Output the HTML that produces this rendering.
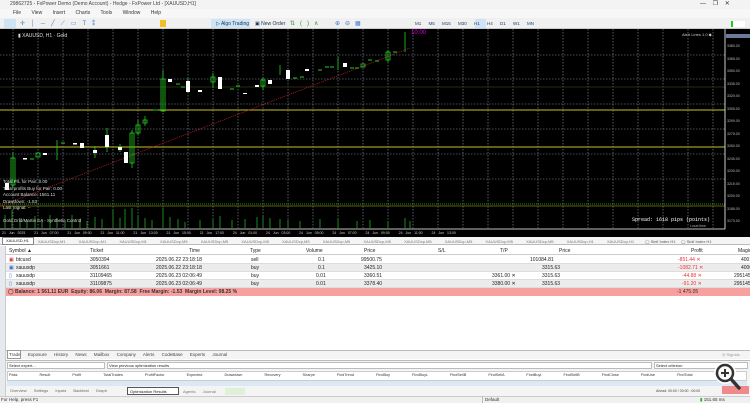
<!DOCTYPE html>
<html><head><meta charset="utf-8"><style>
*{margin:0;padding:0;box-sizing:border-box}
body{width:750px;height:403px;overflow:hidden;background:#fff;font-family:"Liberation Sans",sans-serif;font-size:5px;color:#222;position:relative}
.a{position:absolute;white-space:nowrap}
.row{position:absolute;left:6px;width:744px;height:8px;border-bottom:1px solid #ddd}
.c{position:absolute;top:1px;font-size:5px}
</style></head><body>
<div class="a" style="left:0;top:0;width:750px;height:9px;background:#f3f3f3"></div>
<div class="a" style="left:10px;top:1px;font-size:5px;color:#444">29862725 - FxPower Demo (Demo Account) - Hedge - FxPower Ltd - [XAUUSD,H1]</div>
<div class="a" style="left:700px;top:0;font-size:6px;color:#333">—&nbsp;&nbsp;&nbsp;&nbsp;❐&nbsp;&nbsp;&nbsp;&nbsp;✕</div>
<div class="a" style="left:0;top:9px;width:750px;height:9px;background:#f7f7f7"></div>
<div class="a" style="left:13px;top:10px;font-size:5px;color:#333;word-spacing:9px">File View Insert Charts Tools Window Help</div>
<div class="a" style="left:0;top:18px;width:750px;height:11px;background:#f0f0f0;border-bottom:1px solid #ccc"></div>
<div class="a" style="left:4px;top:19px;width:12px;height:9px;background:#cfe3f7"></div>
<div class="a" style="left:211px;top:19px;width:39px;height:9px;background:#cfe3f7"></div>
<div class="a" style="left:216px;top:21px;font-size:5px;color:#135">▷ Algo Trading</div>
<div class="a" style="left:255px;top:21px;font-size:5px;color:#135">▣ New Order</div>
<div class="a" style="left:160px;top:20px;width:6px;height:7px;background:#f0c020"></div>
<div class="a" style="left:20px;top:20px;font-size:6px;color:#3a7bd0;letter-spacing:6px">✛│─╱⟋▭T⁑</div>
<div class="a" style="left:290px;top:20px;font-size:6px;color:#2a9a2a;letter-spacing:5px">⇅()∧</div>
<div class="a" style="left:335px;top:20px;font-size:6px;color:#3a7bd0;letter-spacing:5px">⊕⊖▦</div>
<div class="a" style="left:475px;top:19px;width:11px;height:9px;background:#cfe3f7"></div>
<div class="a" style="left:415px;top:21px;font-size:4.5px;color:#246;word-spacing:6px">M1 M5 M15 M30 H1 H4 D1 W1 MN</div>
<div class="a" style="left:731px;top:21px;width:14px;height:6px;background:#fff;border-left:2px solid #2c2"></div>
<div class="a" style="left:0;top:29px;width:750px;height:208px;background:#000"></div>
<svg class="a" style="left:0;top:29px" width="750" height="208" viewBox="0 29 750 208">
<g stroke="#8a9aa8" stroke-width=".6" stroke-dasharray="1.5,1.5">
<line x1="0" y1="55" x2="725" y2="55"/><line x1="0" y1="79" x2="725" y2="79"/><line x1="0" y1="104" x2="725" y2="104"/><line x1="0" y1="129" x2="725" y2="129"/><line x1="0" y1="154" x2="725" y2="154"/><line x1="0" y1="179" x2="725" y2="179"/>
<line x1="13" y1="29" x2="13" y2="228"/><line x1="38" y1="29" x2="38" y2="228"/><line x1="63" y1="29" x2="63" y2="228"/><line x1="88" y1="29" x2="88" y2="228"/><line x1="113" y1="29" x2="113" y2="228"/><line x1="138" y1="29" x2="138" y2="228"/><line x1="163" y1="29" x2="163" y2="228"/><line x1="188" y1="29" x2="188" y2="228"/><line x1="213" y1="29" x2="213" y2="228"/><line x1="238" y1="29" x2="238" y2="228"/><line x1="263" y1="29" x2="263" y2="228"/><line x1="288" y1="29" x2="288" y2="228"/><line x1="313" y1="29" x2="313" y2="228"/><line x1="338" y1="29" x2="338" y2="228"/><line x1="363" y1="29" x2="363" y2="228"/><line x1="388" y1="29" x2="388" y2="228"/><line x1="413" y1="29" x2="413" y2="228"/><line x1="438" y1="29" x2="438" y2="228"/><line x1="463" y1="29" x2="463" y2="228"/><line x1="488" y1="29" x2="488" y2="228"/><line x1="513" y1="29" x2="513" y2="228"/><line x1="538" y1="29" x2="538" y2="228"/><line x1="563" y1="29" x2="563" y2="228"/><line x1="588" y1="29" x2="588" y2="228"/><line x1="613" y1="29" x2="613" y2="228"/><line x1="638" y1="29" x2="638" y2="228"/><line x1="663" y1="29" x2="663" y2="228"/><line x1="688" y1="29" x2="688" y2="228"/><line x1="713" y1="29" x2="713" y2="228"/>
</g>
<line x1="0" y1="87" x2="725" y2="87" stroke="#3a3a10" stroke-width=".8"/>
<line x1="0" y1="110" x2="725" y2="110" stroke="#c8c020" stroke-width="1"/>
<line x1="0" y1="147" x2="725" y2="147" stroke="#c8c020" stroke-width="1"/>
<line x1="0" y1="206" x2="725" y2="206" stroke="#8a7a10" stroke-width=".8"/>
<line x1="0" y1="204" x2="725" y2="204" stroke="#2c2" stroke-width=".7" stroke-dasharray="1,1"/>
<line x1="0" y1="206" x2="410" y2="48" stroke="#d22" stroke-width=".7" stroke-dasharray="1,1"/>
<g stroke="#2c2" stroke-width=".8">
<line x1="13" y1="152" x2="13" y2="188"/><line x1="57" y1="140" x2="57" y2="160"/><line x1="107" y1="128" x2="107" y2="152"/><line x1="132" y1="130" x2="132" y2="168"/><line x1="163" y1="70" x2="163" y2="112"/><line x1="188" y1="78" x2="188" y2="93"/><line x1="213" y1="73" x2="213" y2="88"/><line x1="263" y1="77" x2="263" y2="90"/><line x1="280" y1="65" x2="280" y2="75"/><line x1="338" y1="57" x2="338" y2="70"/><line x1="405" y1="32" x2="405" y2="52"/><line x1="388" y1="50" x2="388" y2="62"/>
<line x1="138" y1="120" x2="138" y2="135"/><line x1="145" y1="116" x2="145" y2="126"/><line x1="95" y1="146" x2="95" y2="158"/><line x1="120" y1="144" x2="120" y2="152"/>
</g>
<g fill="#fff">
<rect x="5" y="183" width="4" height="7"/><rect x="23" y="158" width="4" height="1.5"/><rect x="43" y="153" width="4" height="2"/><rect x="73" y="143" width="4" height="1.5"/><rect x="80" y="143" width="4" height="5"/><rect x="93" y="150" width="4" height="3"/><rect x="105" y="135" width="4" height="12"/><rect x="118" y="147" width="4" height="3"/><rect x="124" y="152" width="4" height="11"/><rect x="168" y="79" width="4" height="3"/><rect x="186" y="81" width="4" height="11"/><rect x="198" y="90" width="4" height="2"/><rect x="218" y="77" width="4" height="12"/><rect x="243" y="93" width="4" height="1"/><rect x="255" y="85" width="4" height="2"/><rect x="268" y="80" width="4" height="4"/><rect x="286" y="70" width="4" height="9"/><rect x="305" y="69" width="4" height="2"/><rect x="343" y="63" width="4" height="4"/>
</g>
<g fill="none" stroke="#2c2" stroke-width=".8">
<rect x="11" y="158" width="4" height="27"/><rect x="36" y="153" width="4" height="4"/><rect x="130" y="133" width="4" height="30"/><rect x="136" y="125" width="4" height="8"/><rect x="143" y="120" width="4" height="3"/><rect x="161" y="79" width="4" height="32"/><rect x="211" y="77" width="4" height="5"/><rect x="261" y="80" width="4" height="6"/><rect x="361" y="64" width="4" height="3"/><rect x="386" y="52" width="4" height="8"/>
</g>
<g stroke="#2c2" stroke-width="1">
<line x1="30" y1="159" x2="34" y2="159"/><line x1="61" y1="143" x2="65" y2="143"/><line x1="153" y1="110" x2="158" y2="110"/><line x1="176" y1="84" x2="180" y2="84"/><line x1="181" y1="87" x2="185" y2="87"/><line x1="230" y1="89" x2="234" y2="89"/><line x1="236" y1="86" x2="240" y2="86"/><line x1="293" y1="78" x2="297" y2="78"/><line x1="300" y1="77" x2="304" y2="77"/><line x1="318" y1="70" x2="322" y2="70"/><line x1="325" y1="67" x2="329" y2="67"/><line x1="330" y1="67" x2="334" y2="67"/><line x1="350" y1="68" x2="354" y2="68"/><line x1="355" y1="68" x2="359" y2="68"/><line x1="368" y1="60" x2="372" y2="60"/><line x1="375" y1="61" x2="379" y2="61"/><line x1="393" y1="52" x2="397" y2="52"/>
</g>
<g stroke="#1a8a1a" stroke-width="1">
<line x1="5" y1="228" x2="5" y2="215"/><line x1="12" y1="228" x2="12" y2="210"/><line x1="20" y1="228" x2="20" y2="218"/><line x1="27" y1="228" x2="27" y2="220"/><line x1="35" y1="228" x2="35" y2="216"/><line x1="42" y1="228" x2="42" y2="219"/><line x1="50" y1="228" x2="50" y2="215"/><line x1="57" y1="228" x2="57" y2="218"/><line x1="65" y1="228" x2="65" y2="220"/><line x1="72" y1="228" x2="72" y2="215"/><line x1="80" y1="228" x2="80" y2="219"/><line x1="87" y1="228" x2="87" y2="221"/><line x1="95" y1="228" x2="95" y2="217"/><line x1="102" y1="228" x2="102" y2="219"/><line x1="113" y1="228" x2="113" y2="210"/><line x1="120" y1="228" x2="120" y2="218"/><line x1="125" y1="228" x2="125" y2="209"/><line x1="132" y1="228" x2="132" y2="208"/><line x1="138" y1="228" x2="138" y2="216"/><line x1="145" y1="228" x2="145" y2="218"/><line x1="152" y1="228" x2="152" y2="220"/><line x1="163" y1="228" x2="163" y2="208"/><line x1="170" y1="228" x2="170" y2="217"/><line x1="178" y1="228" x2="178" y2="219"/><line x1="185" y1="228" x2="185" y2="222"/><line x1="200" y1="228" x2="200" y2="220"/><line x1="213" y1="228" x2="213" y2="218"/><line x1="220" y1="228" x2="220" y2="216"/><line x1="232" y1="228" x2="232" y2="220"/><line x1="245" y1="228" x2="245" y2="219"/><line x1="257" y1="228" x2="257" y2="217"/><line x1="263" y1="228" x2="263" y2="216"/><line x1="270" y1="228" x2="270" y2="218"/><line x1="280" y1="228" x2="280" y2="219"/><line x1="288" y1="228" x2="288" y2="220"/><line x1="300" y1="228" x2="300" y2="221"/><line x1="320" y1="228" x2="320" y2="219"/><line x1="338" y1="228" x2="338" y2="218"/><line x1="357" y1="228" x2="357" y2="221"/><line x1="370" y1="228" x2="370" y2="220"/><line x1="388" y1="228" x2="388" y2="221"/><line x1="405" y1="228" x2="405" y2="218"/><line x1="410" y1="228" x2="410" y2="221"/>
</g>
<line x1="0" y1="229" x2="725" y2="229" stroke="#fff" stroke-width=".8"/>
<line x1="725" y1="29" x2="725" y2="229" stroke="#fff" stroke-width=".8"/>
</svg>
<div class="a" style="left:18px;top:33px;color:#ddd;font-size:5px">▮ XAUUSD, H1 · Gold</div>
<div class="a" style="left:411px;top:30px;color:#e0e;font-size:6px">10:00</div>
<div class="a" style="left:682px;top:32px;color:#ccc;font-size:4px">Alert Lines 1.0 ◆</div>
<div class="a" style="left:3px;top:179px;color:#ddd;font-size:4.5px;line-height:6.5px">Total P/L for Pair: 0.00<br>Total profits Buy for Pair: 0.00<br>Account Balance: 1561.11<br>Drawdown: -1.53<br>Last Signal: --<br><br>Gold Grid/Martin EA - Synthetic Control</div>
<div class="a" style="left:632px;top:217px;color:#fff;font-family:'Liberation Mono',monospace;font-size:5px">Spread: 1618 pips (points)</div>
<div class="a" style="left:690px;top:224px;color:#aaa;font-size:3.5px">Local time</div>
<div class="a" style="left:726px;top:34px;width:24px;height:4px;background:#6a7a9a"></div>
<div class="a" style="left:727px;top:40px;color:#bbb;font-size:3.5px;line-height:12.5px">3380.00<br>3365.00<br>3350.00<br>3335.00<br>3320.00<br>3305.00<br>3290.00<br>3275.00<br>3260.00<br>3245.00<br>3230.00<br>3215.00<br>3200.00<br>3185.00<br>3170.00</div>
<div class="a" style="left:2px;top:231px;color:#ccc;font-size:3.5px;word-spacing:2px">21 Jun 2025 &nbsp; 21 Jun 07:00 &nbsp; 21 Jun 09:00 &nbsp; 21 Jun 11:00 &nbsp; 21 Jun 13:00 &nbsp; 21 Jun 15:00 &nbsp; 21 Jun 17:00 &nbsp; 24 Jun 01:00 &nbsp; 24 Jun 03:00 &nbsp; 24 Jun 05:00 &nbsp; 24 Jun 07:00 &nbsp; 24 Jun 09:00 &nbsp; 24 Jun 11:00 &nbsp; 24 Jun 13:00</div>
<div class="a" style="left:0;top:237px;width:750px;height:8px;background:#f4f4f4;border-bottom:1px solid #bbb"></div>
<div class="a" style="left:2px;top:237px;width:32px;height:8px;background:#fff;border:1px solid #888;font-size:4px;padding-left:3px">XAUUSD,H1</div>
<div class="a" style="left:38px;top:239px;font-size:4px;color:#777;word-spacing:12px">XAUUSDcp,M1 XAUUSDcp,M1 XAUUSDcp,M1 XAUUSDcp,M5 XAUUSDcp,M5 XAUUSDcp,M5 XAUUSDcp,M5 XAUUSDcp,M5 XAUUSDcp,M5 XAUUSDcp,M5 XAUUSDcp,M5 XAUUSDcp,M5 XAUUSDcp,M5 XAUUSDcp,H1 XAUUSDcp,H1</div>
<div class="a" style="left:645px;top:239px;font-size:4px;color:#555">◯ Sinif Index H1 &nbsp;&nbsp;&nbsp;&nbsp;◯ Sinif Index H1</div>
<div class="a" style="left:0;top:246px;width:6px;height:150px;background:#e6e9ee;border-right:1px solid #ccc"></div>
<div class="row" style="top:247px;background:#fff;border-bottom:1px solid #ccc"><span class="c" style="left:3px">Symbol ▲</span><span class="c" style="left:84px">Ticket</span><span class="c" style="left:183px">Time</span><span class="c" style="left:244px">Type</span><span class="c" style="left:300px">Volume</span><span class="c" style="left:358px">Price</span><span class="c" style="left:432px">S/L</span><span class="c" style="left:494px">T/P</span><span class="c" style="left:553px">Price</span><span class="c" style="left:685px">Profit</span><span class="c" style="left:732px">Magic</span></div>
<div class="row" style="top:256px;background:#fff"><span class="c" style="left:3px;color:#c33">▣</span><span class="c" style="left:10px">btcusd</span><span class="c" style="left:84px">3050394</span><span class="c" style="left:150px">2025.06.22 23:18:18</span><span class="c" style="left:245px">sell</span><span class="c" style="left:312px">0.1</span><span class="c" style="left:355px">99500.75</span><span class="c" style="left:524px">101084.81</span><span class="c" style="left:672px;color:#e33">-851.44 ✕</span><span class="c" style="left:735px">4001</span></div>
<div class="row" style="top:264px;background:#ececec"><span class="c" style="left:3px;color:#36c">▣</span><span class="c" style="left:10px">xauusdp</span><span class="c" style="left:84px">3051661</span><span class="c" style="left:150px">2025.06.22 23:18:18</span><span class="c" style="left:245px">buy</span><span class="c" style="left:312px">0.1</span><span class="c" style="left:358px">3425.10</span><span class="c" style="left:536px">3315.63</span><span class="c" style="left:672px;color:#e33">-1082.71 ✕</span><span class="c" style="left:735px">4000</span></div>
<div class="row" style="top:272px;background:#fff"><span class="c" style="left:3px;color:#36c">▯</span><span class="c" style="left:10px">xauusdp</span><span class="c" style="left:84px">31109465</span><span class="c" style="left:150px">2025.06.23 02:06:49</span><span class="c" style="left:245px">buy</span><span class="c" style="left:310px">0.01</span><span class="c" style="left:358px">3360.51</span><span class="c" style="left:486px">3361.00 ✕</span><span class="c" style="left:536px">3315.63</span><span class="c" style="left:676px;color:#e33">-44.88 ✕</span><span class="c" style="left:728px">2951454</span></div>
<div class="row" style="top:280px;background:#ececec"><span class="c" style="left:3px;color:#36c">▯</span><span class="c" style="left:10px">xauusdp</span><span class="c" style="left:84px">31109875</span><span class="c" style="left:150px">2025.06.23 02:06:49</span><span class="c" style="left:245px">buy</span><span class="c" style="left:310px">0.01</span><span class="c" style="left:358px">3378.40</span><span class="c" style="left:486px">3380.00 ✕</span><span class="c" style="left:536px">3315.63</span><span class="c" style="left:676px;color:#e33">-91.20 ✕</span><span class="c" style="left:728px">2951454</span></div>
<div class="row" style="top:288px;background:#f7a0a0;border:none"><span class="c" style="left:2px;font-weight:bold;color:#333">◯ Balance: 1 561.11 EUR &nbsp;Equity: 86.06 &nbsp;Margin: 87.58 &nbsp;Free Margin: -1.53 &nbsp;Margin Level: 98.25 %</span><span class="c" style="left:671px;color:#333">-1 475.05</span></div>
<div class="a" style="left:6px;top:350px;width:744px;height:9px;background:#f4f4f4;border-top:1px solid #bbb"></div>
<div class="a" style="left:7px;top:350px;width:14px;height:9px;background:#fff;border:1px solid #999"></div>
<div class="a" style="left:9px;top:352px;font-size:4.5px;color:#444;word-spacing:6px">Trade Exposure History News Mailbox Company Alerts CodeBase Experts Journal</div>
<div class="a" style="left:722px;top:352px;font-size:4px;color:#999">◎ Signals</div>
<div class="a" style="left:6px;top:360px;width:744px;height:36px;background:#f4f4f4;border-top:1px solid #bbb"></div>
<div class="a" style="left:7px;top:362px;width:98px;height:7px;background:#fff;border:1px solid #bbb;font-size:4px;padding-left:1px">Select expert...</div>
<div class="a" style="left:107px;top:362px;width:545px;height:7px;background:#fff;border:1px solid #bbb;font-size:4px;padding-left:1px">View previous optimization results</div>
<div class="a" style="left:654px;top:362px;width:94px;height:7px;background:#fff;border:1px solid #bbb;font-size:4px;padding-left:1px">Select criterion</div>
<div class="a" style="left:7px;top:371px;width:740px;height:10px;background:#fff;border:1px solid #ccc"></div>
<div class="a" style="left:9px;top:373px;font-size:3.8px;color:#333;word-spacing:21px">Pass Result Profit TotalTrades ProfitFactor Expected Drawdown Recovery Sharpe FindTrend FindBuy FindBuyL FindSellB FindSellA FindBuyI FindSellB FindClose FindUse FindTotal FindClose FindMin</div>
<div class="a" style="left:7px;top:381px;width:740px;height:5px;background:#dbe8f5"></div>
<div class="a" style="left:7px;top:387px;width:230px;height:8px;font-size:4px;color:#666;word-spacing:6px;padding-left:3px;padding-top:1px">Overview Settings Inputs Backtest Graph</div>
<div class="a" style="left:127px;top:387px;width:52px;height:8px;background:#fff;border:1px solid #555;font-size:4px;padding:1px 2px">Optimization Results</div>
<div class="a" style="left:183px;top:389px;font-size:4px;color:#777;word-spacing:6px">Agents Journal</div>
<div class="a" style="left:225px;top:388px;width:20px;height:7px;background:#dff0d8"></div>
<div class="a" style="left:656px;top:389px;font-size:3.5px;color:#444">Ahead: 00:00 / 00:00 : 00:00</div>
<div class="a" style="left:722px;top:386px;width:27px;height:8px;background:#f08a8a"></div>
<svg class="a" style="left:705px;top:358px" width="45" height="38"><circle cx="20" cy="15" r="11" fill="#fff" opacity=".85"/><circle cx="20" cy="15" r="8" fill="none" stroke="#333" stroke-width="2.5"/><line x1="16" y1="15" x2="24" y2="15" stroke="#333" stroke-width="2"/><line x1="20" y1="11" x2="20" y2="19" stroke="#333" stroke-width="2"/><line x1="26" y1="21" x2="34" y2="30" stroke="#333" stroke-width="3.5" stroke-linecap="round"/></svg>
<div class="a" style="left:0;top:396px;width:750px;height:7px;background:#f0f0f0;border-top:1px solid #ccc"></div>
<div class="a" style="left:1px;top:397px;font-size:4.5px;color:#333">For Help, press F1</div>
<div class="a" style="left:482px;top:396px;width:1px;height:7px;background:#bbb"></div>
<div class="a" style="left:485px;top:397px;font-size:4.5px;color:#333">Default</div>
<div class="a" style="left:700px;top:397px;font-size:4.5px;color:#333"><span style="color:#2a2">▮</span> 151.65 ms</div>
</body></html>
